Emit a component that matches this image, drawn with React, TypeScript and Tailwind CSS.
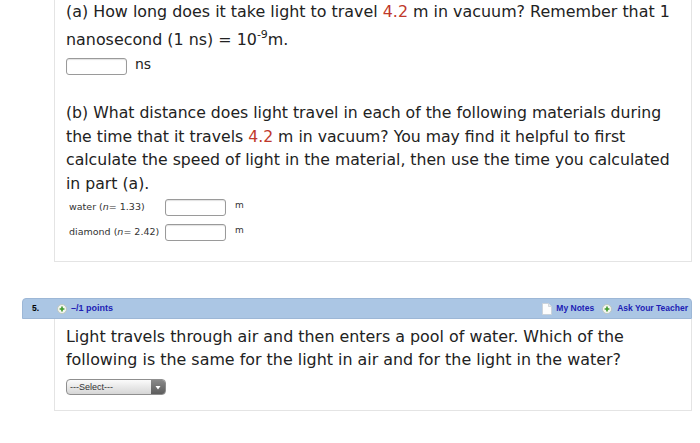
import React from 'react';

const verdana = { fontFamily: '"DejaVu Sans", Verdana, sans-serif' };
const arial = { fontFamily: '"Liberation Sans", Arial, sans-serif' };

function PlusDot() {
  return (
    <svg width="10" height="10" viewBox="0 0 10 10" className="shrink-0">
      <circle cx="5" cy="5" r="4.5" fill="#f4f6f2" stroke="#b9c2b4" strokeWidth="0.8" />
      <path d="M5 2.6v4.8M2.6 5h4.8" stroke="#3c9a2a" strokeWidth="1.6" />
    </svg>
  );
}

function NoteIcon() {
  return (
    <svg width="10" height="12" viewBox="0 0 10 12" className="shrink-0">
      <path d="M0.5 0.5h6l3 3v8h-9z" fill="#fdfdfd" stroke="#c9cfd6" strokeWidth="0.8" />
      <path d="M6.5 0.5v3h3" fill="#e8ebee" stroke="#c9cfd6" strokeWidth="0.8" />
    </svg>
  );
}

function Box() {
  return <div className="w-[61px] h-[17px] shrink-0 rounded-[3px] border border-[#9a9a9a] bg-white shadow-[inset_0_1px_1px_rgba(0,0,0,0.12)]" />;
}

export default function App() {
  return (
    <div className="w-[700px] h-[443px] bg-white overflow-hidden text-[#222]" style={verdana}>
      {/* previous question, continued */}
      <div className="flow-root ml-[54px] w-[638px] h-[262px] border-x border-b border-[#e4e4e4] pl-[11px]">
        <div className="text-[15.9px] leading-[28px] -mt-[2px] whitespace-nowrap">
          <div>(a) How long does it take light to travel <span className="text-[#c0392b]">4.2</span> m in vacuum? Remember that 1</div>
          <div>
            nanosecond (1 ns) = 10<sup className="text-[11px] relative -top-[7px]">-9</sup>m.
          </div>
        </div>
        <div className="mt-[4px] flex items-center gap-[8px]">
          <Box />
          <span className="text-[14px] -mt-[4px]">ns</span>
        </div>
        <div className="mt-[26px] text-[15.7px] leading-[23.5px] whitespace-nowrap">
          <div>(b) What distance does light travel in each of the following materials during</div>
          <div>the time that it travels <span className="text-[#c0392b]">4.2</span> m in vacuum? You may find it helpful to first</div>
          <div>calculate the speed of light in the material, then use the time you calculated</div>
          <div>in part (a).</div>
        </div>
        <div className="mt-[4px] flex flex-col gap-[8px] text-[9.5px] text-[#333]">
          <div className="flex items-center">
            <span className="w-[99px] pl-[3px]">water (<i>n</i>= 1.33)</span>
            <Box />
            <span className="ml-[9px] text-[9px] -mt-[4px]">m</span>
          </div>
          <div className="flex items-center">
            <span className="w-[99px] pl-[3px]">diamond (<i>n</i>= 2.42)</span>
            <Box />
            <span className="ml-[9px] text-[9px] -mt-[4px]">m</span>
          </div>
        </div>
      </div>

      {/* question 5 */}
      <div className="mt-[36px] ml-[22px] w-[670px]">
        <div className="h-[21px] rounded-t-[4px] border border-[#9db7d6] bg-[#abc6e4] flex items-center text-[8.5px] font-bold" style={arial}>
          <span className="ml-[9px] w-[25px] text-black">5.</span>
          <PlusDot />
          <span className="ml-[4px] text-[#1d1db5] text-[9px]">–/1 points</span>
          <div className="ml-auto mr-[3px] flex items-center">
            <NoteIcon />
            <span className="ml-[4px] text-[#1d1db5]">My Notes</span>
            <span className="ml-[8px]"><PlusDot /></span>
            <span className="ml-[5px] text-[#1d1db5]">Ask Your Teacher</span>
          </div>
        </div>
        <div className="ml-[32px] w-[638px] h-[92px] border-x border-b border-[#e4e4e4] pl-[11px] pt-[6px]">
          <div className="text-[15.9px] leading-[23px] whitespace-nowrap">
            <div>Light travels through air and then enters a pool of water. Which of the</div>
            <div>following is the same for the light in air and for the light in the water?</div>
          </div>
          <div className="mt-[8px] w-[100px] h-[16px] rounded-[4px] border border-[#8f8f8f] flex overflow-hidden bg-gradient-to-b from-[#fbfbfb] to-[#d6d6d6]" style={arial}>
            <span className="flex-1 text-[9px] leading-[14px] pl-[3px] text-[#333]">---Select---</span>
            <span className="w-[14px] bg-gradient-to-b from-[#8a8a8a] to-[#5d5d5d] flex items-center justify-center">
              <svg width="6" height="5" viewBox="0 0 6 5"><path d="M0.5 1h5L3 4.5z" fill="#fff" /></svg>
            </span>
          </div>
        </div>
      </div>
    </div>
  );
}
